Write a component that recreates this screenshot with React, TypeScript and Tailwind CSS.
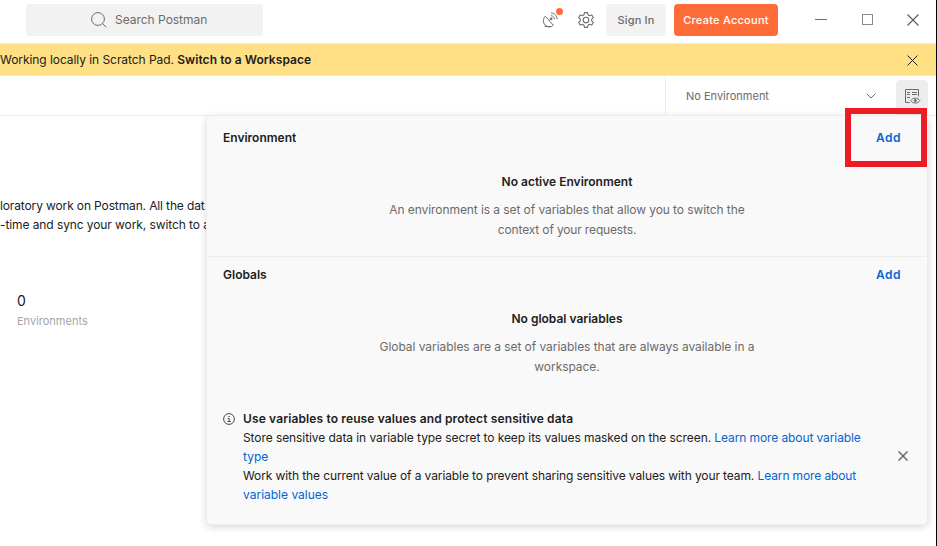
import type { ReactNode } from 'react';

function Cross({ size, className, width = 1.1 }: { size: number; className?: string; width?: number }) {
  return (
    <svg width={size} height={size} viewBox={`0 0 ${size} ${size}`} className={className} stroke="currentColor" strokeWidth={width} fill="none">
      <path d={`M0.5 0.5L${size - 0.5} ${size - 0.5}M${size - 0.5} 0.5L0.5 ${size - 0.5}`} />
    </svg>
  );
}

function Satellite() {
  return (
    <svg width="18" height="18" viewBox="0 0 18 18" fill="none" stroke="#6b6b6b" strokeWidth="1">
      <path d="M3.3 5.2C0.8 7.7 0.8 11.7 3.2 14.1C5.4 16.3 9 16.4 11.3 14.2Z" />
      <path d="M3.4 14.3L3 15.6H8.8M7.2 9.7L9.2 7.8" />
      <circle cx="9.2" cy="7.8" r="0.9" fill="#6b6b6b" />
      <path d="M9 4.7C10.9 4.7 12.4 6.2 12.4 8.1M9 2C12.4 2 15 4.7 15 8.1" />
    </svg>
  );
}

function Gear() {
  return (
    <svg width="16" height="16" viewBox="0 0 16 16" fill="none" stroke="#6b6b6b" strokeWidth="1.1" strokeLinejoin="round">
      <path d="M6.5 0.6H9.5L10 2.7L11.7 3.7L13.8 3L15.3 5.6L13.7 7.1V8.9L15.3 10.4L13.8 13L11.7 12.3L10 13.3L9.5 15.4H6.5L6 13.3L4.3 12.3L2.2 13L0.7 10.4L2.3 8.9V7.1L0.7 5.6L2.2 3L4.3 3.7L6 2.7Z" />
      <circle cx="8" cy="8" r="2.8" />
    </svg>
  );
}

function QuickLook() {
  return (
    <svg width="16" height="16" viewBox="0 0 16 16" fill="none" stroke="#6b6b6b">
      <path d="M5 13.5H0.5V0.5H13.5V7.5" />
      <path d="M2 3.5H5M7 3.5H12M2 5.5H5M7 5.5H12M2 8.5H5" />
      <path d="M5.7 11.6C7.8 8.3 12.8 8.3 14.9 11.6C12.8 14.9 7.8 14.9 5.7 11.6Z" />
      <circle cx="10.3" cy="11.6" r="1.1" fill="#6b6b6b" />
    </svg>
  );
}

function Header() {
  return (
    <header className="flex h-[43px] shrink-0 items-start pt-1">
      <div className="ml-[26px] flex h-8 w-[237px] items-center rounded bg-[#f2f2f2] pl-[65px] text-[#6b6b6b]">
        <svg width="16" height="16" viewBox="0 0 16 16" fill="none" stroke="currentColor">
          <circle cx="7" cy="7" r="6.4" />
          <path d="M11.5 11.5L15.3 15.3" />
        </svg>
        <span className="ml-2 text-[12px] tracking-[-0.02px]">Search Postman</span>
      </div>
      <div className="relative ml-[279px] mt-[7px]">
        <Satellite />
        <span className="absolute left-[14px] top-[-3px] size-[7px] rounded-full bg-[#ff6c37]" />
      </div>
      <div className="ml-[18px] mt-2"><Gear /></div>
      <button className="ml-3 h-8 w-[60px] rounded bg-[#f2f2f2] text-[11px] font-medium tracking-[0.15px] text-[#6b6b6b]">Sign In</button>
      <button className="ml-2 h-8 w-[104px] rounded bg-[#ff6c37] text-[11px] font-medium tracking-[0.25px] text-white">Create Account</button>
      <span className="ml-[37px] mt-[15px] h-px w-3 bg-[#6b6b6b]" />
      <span className="ml-[35px] mt-[10px] size-[11px] border border-[#8b8b8b]" />
      <Cross size={12} className="ml-[34px] mt-[10px] text-[#5b5b5b]" />
    </header>
  );
}

function Section({ title, heading, lines, className }: { title: string; heading: string; lines: ReactNode[]; className: string }) {
  return (
    <section className={className}>
      <div className="flex justify-between pl-4 pr-[26px] font-semibold leading-5">
        <h2>{title}</h2>
        <a className="tracking-[0.5px] text-[#0265d2]">Add</a>
      </div>
      <div className="mt-6 text-center leading-5">
        <h3 className="font-semibold">{heading}</h3>
        <div className="mt-2 text-[#6b6b6b]">
          {lines.map((line, i) => <p key={i}>{line}</p>)}
        </div>
      </div>
    </section>
  );
}

export default function App() {
  return (
    <div className="relative flex h-[546px] w-[937px] flex-col overflow-hidden whitespace-nowrap border-r border-black bg-white font-['Inter','Liberation_Sans',sans-serif] text-[12px] text-[#212121]">
      <Header />
      <div className="flex h-[33px] shrink-0 items-center justify-between border-y border-[#ededed] border-b-[#e9e9ec] bg-[#ffe085] pr-[18px]">
        <p className="tracking-[-0.06px]">Working locally in Scratch Pad. <b className="font-semibold tracking-[0.06px]">Switch to a Workspace</b></p>
        <Cross size={11} width={1} className="mt-px" />
      </div>
      <div className="flex h-10 shrink-0 justify-end border-b border-[#ededed]">
        <div className="flex w-[231px] items-center border-l border-[#ededed] pl-5 pt-px text-[#6b6b6b]">
          <span className="w-[180px] text-[11px] tracking-[0px]">No Environment</span>
          <svg width="10" height="6" viewBox="0 0 10 6" fill="none" stroke="currentColor"><path d="M0.7 0.7L5 5L9.3 0.7" /></svg>
        </div>
        <div className="mr-2 mt-1 flex h-[35px] w-8 justify-center rounded-t bg-[#ededed] pl-px pt-[9px]"><QuickLook /></div>
      </div>
      <main className="pt-20 leading-[19px]">
        <p className="tracking-[-0.13px]">loratory work on Postman. All the dat</p>
        <p className="tracking-[-0.09px]">-time and sync your work, switch to a W</p>
        <div className="ml-[17px] mt-[57px]">
          <p className="text-[14px] leading-5">0</p>
          <p className="text-[11px] leading-5 text-[#a6a6a6]">Environments</p>
        </div>
      </main>
      <aside className="absolute left-[207px] top-[116px] h-[408px] w-[720px] rounded bg-[#f9f9f9] shadow-[0_0_0_1px_#ededed,0_2px_8px_rgba(0,0,0,0.2)]">
        <Section
          className="h-[141px] border-b border-[#ededed] pt-3"
          title="Environment"
          heading="No active Environment"
          lines={[
            <span className="tracking-[-0.08px]">An environment is a set of variables that allow you to switch the</span>,
            <span className="tracking-[-0.15px]">context of your requests.</span>,
          ]}
        />
        <Section
          className="h-[152px] pt-2"
          title="Globals"
          heading="No global variables"
          lines={[
            <span className="tracking-[-0.05px]">Global variables are a set of variables that are always available in a</span>,
            <span className="tracking-[-0.05px]">workspace.</span>,
          ]}
        />
        <div className="flex pl-4 leading-[19px]">
          <svg className="mt-1" width="12" height="12" viewBox="0 0 12 12" fill="none" stroke="#4b4b4b">
            <circle cx="6" cy="6" r="5.4" />
            <path d="M4.7 5.5H6.2V8.5M4.5 8.5H7.8M5.3 3.5H6.7" />
          </svg>
          <div className="ml-2 w-[655px]">
            <h3 className="font-semibold tracking-[0.13px]">Use variables to reuse values and protect sensitive data</h3>
            <p><span className="tracking-[-0.08px]">Store sensitive data in variable type secret to keep its values masked on the screen. </span><a className="text-[#0265d2]"><span className="tracking-[-0.1px]">Learn more about variable</span><br />type</a></p>
            <p><span className="tracking-[-0.1px]">Work with the current value of a variable to prevent sharing sensitive values with your team. </span><a className="text-[#0265d2]"><span className="tracking-[-0.12px]">Learn more about</span><br />variable values</a></p>
          </div>
          <Cross size={10} width={1.5} className="mt-[42px] text-[#6b6b6b]" />
        </div>
      </aside>
      <div className="pointer-events-none absolute left-[845px] top-[108px] h-[59px] w-[82px] border-[6px] border-[#ed1c24]" />
    </div>
  );
}
